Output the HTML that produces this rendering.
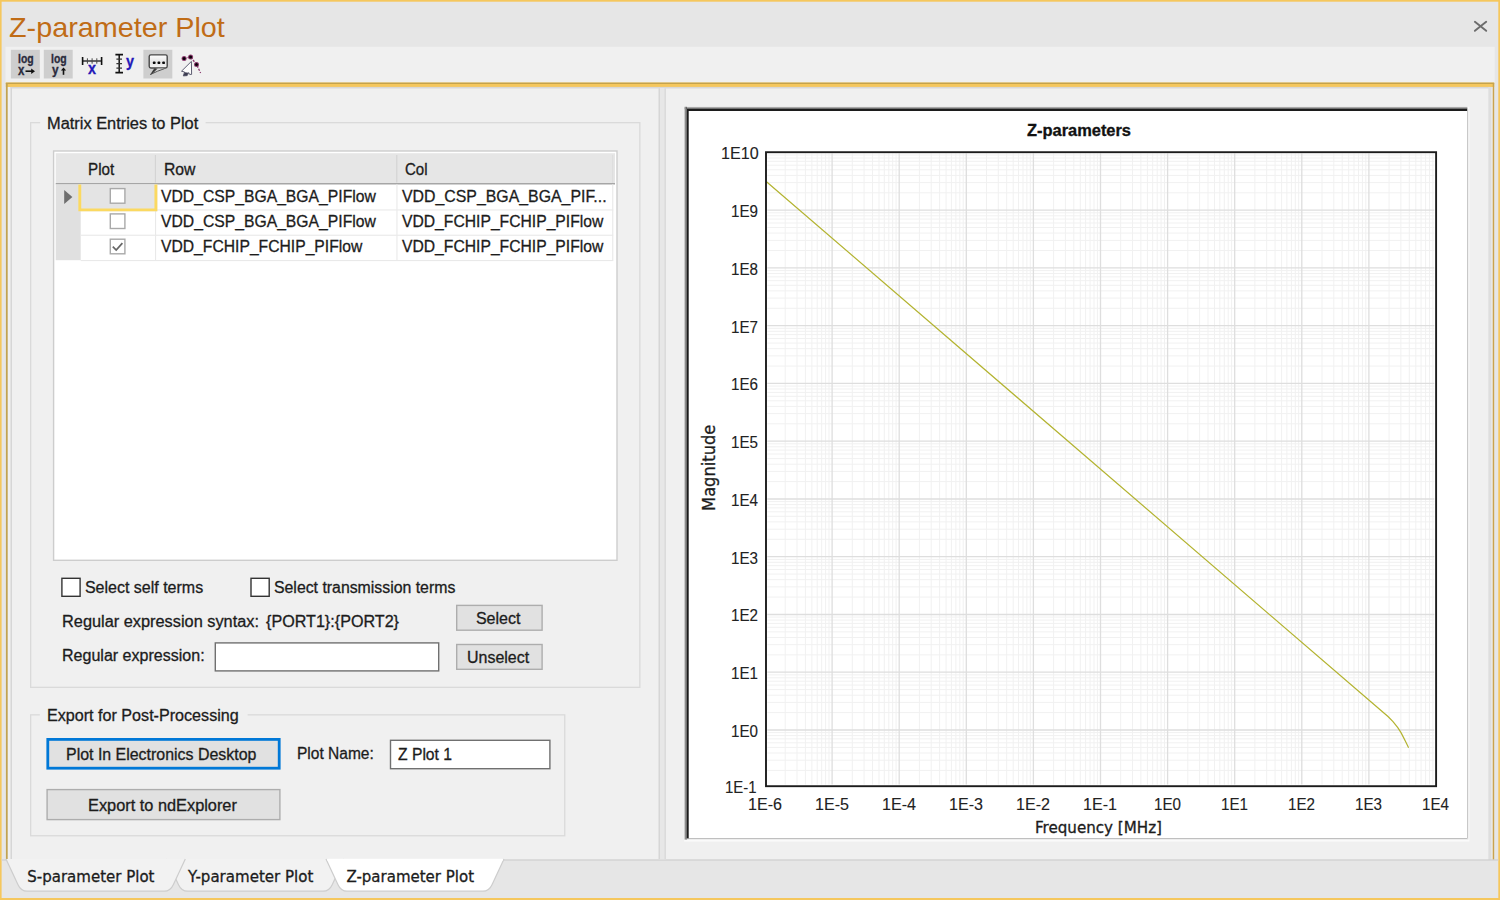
<!DOCTYPE html>
<html lang="en"><head><meta charset="utf-8"><title>Z-parameter Plot</title>
<style>
html,body{margin:0;padding:0}
body{width:1500px;height:900px;position:relative;overflow:hidden;background:#E6E6E6;font-family:'Liberation Sans',sans-serif}
.a{position:absolute;box-sizing:border-box}
.t{position:absolute;white-space:pre;transform-origin:0 0;display:block;-webkit-text-stroke:0.3px currentColor}
.title{-webkit-text-stroke:0 transparent}
.c{-webkit-text-stroke:0.12px currentColor}
svg{overflow:visible}
</style></head>
<body>
<svg class="a" id="ui" style="left:0;top:0" width="1500" height="900" viewBox="0 0 1500 900">
<rect x="0.00" y="0.00" width="1500.00" height="900.00" fill="#E6E6E6" />
<rect x="0.00" y="0.00" width="1500.00" height="1.70" fill="#F5C75D" />
<rect x="0.00" y="898.00" width="1500.00" height="2.00" fill="#F5C75D" />
<rect x="0.00" y="0.00" width="1.60" height="900.00" fill="#F5C75D" />
<rect x="1498.30" y="0.00" width="1.70" height="900.00" fill="#F5C75D" />
<path d="M1474.9 21.8 L1486.2 30.8 M1486.2 21.8 L1474.9 30.8" fill="none" stroke="#6C6C6C" stroke-width="1.9" stroke-linecap="round"/>
<rect x="5.50" y="46.80" width="1489.20" height="36.20" fill="#F0F0F0" />
<rect x="10.90" y="49.80" width="28.90" height="28.70" fill="#CECECE" />
<rect x="43.80" y="49.80" width="28.90" height="28.70" fill="#CECECE" />
<rect x="143.40" y="49.80" width="28.90" height="28.70" fill="#CECECE" />
<path d="M25.5 71.2 H32.4" fill="none" stroke="#111" stroke-width="1.6" />
<path d="M31.2 68.5 L35 71.2 L31.2 73.9 Z" fill="#111"  />
<path d="M63.5 74.8 V69.6" fill="none" stroke="#111" stroke-width="1.6" />
<path d="M60.9 70.6 L63.5 67.4 L66.1 70.6 Z" fill="#111"  />
<path d="M82.6 57 V65 M101.6 57 V65" fill="none" stroke="#111" stroke-width="1.6" />
<path d="M82.6 61 H101.6" fill="none" stroke="#111" stroke-width="1.25" />
<path d="M87.4 58.3 V63.7 M92.1 58.3 V63.7 M96.8 58.3 V63.7" fill="none" stroke="#484848" stroke-width="1.0" />
<path d="M115.4 54.6 H123 M115.4 72.6 H123" fill="none" stroke="#111" stroke-width="1.9" />
<path d="M119.2 54.6 V72.6" fill="none" stroke="#111" stroke-width="1.5" />
<path d="M116.4 59.1 H122 M116.4 63.6 H122 M116.4 68.1 H122" fill="none" stroke="#333" stroke-width="1.1" />
<defs><linearGradient id="bub" x1="0" y1="0" x2="0" y2="1"><stop offset="0" stop-color="#FFFFFF"/><stop offset="0.55" stop-color="#E4E4E4"/><stop offset="1" stop-color="#F4F4F4"/></linearGradient></defs>
<rect x="149.2" y="54.9" width="18" height="13.1" rx="1.7" ry="1.7" fill="url(#bub)" stroke="#484848" stroke-width="1.4"/>
<rect x="152.9" y="61.5" width="2.6" height="2.6" rx="0.7" fill="#0a0a0a"/>
<rect x="157.6" y="61.5" width="2.6" height="2.6" rx="0.7" fill="#0a0a0a"/>
<rect x="162.3" y="61.5" width="2.6" height="2.6" rx="0.7" fill="#0a0a0a"/>
<path d="M150.2 74.7 L156.2 68.6 L164.8 68.6 Z" fill="#D6D6D6"  />
<path d="M154.2 68.6 L157.6 68.6 L152.2 74 L150 74.8 Z" fill="#3a3a3a"  />
<path d="M150.2 74.6 L157.6 71.2 L164.6 68.6" fill="none" stroke="#555" stroke-width="1.0" />
<path d="M184.1 58.4 L190.6 57 L196.5 64.4 L200.6 73" fill="none" stroke="#8A3A6E" stroke-width="1.3" stroke-dasharray="2.2 1.3"/>
<circle cx="184.1" cy="58.4" r="2.5" fill="#8A3A6E"/><circle cx="184.1" cy="58.4" r="1.5" fill="#0a0008"/>
<circle cx="190.6" cy="57.0" r="2.5" fill="#8A3A6E"/><circle cx="190.6" cy="57.0" r="1.5" fill="#0a0008"/>
<circle cx="196.5" cy="64.4" r="2.5" fill="#8A3A6E"/><circle cx="196.5" cy="64.4" r="1.5" fill="#0a0008"/>
<path d="M191.4 61.4 L191.6 74.4 L189.6 74.4 L188.6 72.6 L187.2 75.6 L183.3 75.9 L184.6 72 L181.5 71.2 Z" fill="#FCFCFC" stroke="#54546a" stroke-width="0.95" stroke-linejoin="round"/>
<path d="M184.8 72.2 L188.3 72.8 L187 75.5 L183.5 75.8 Z" fill="#3c3c50"  />
<rect x="5.80" y="82.60" width="1488.40" height="777.40" fill="#F0F0F0" />
<rect x="5.80" y="82.60" width="1488.40" height="4.40" fill="#F5C75D" />
<rect x="5.80" y="82.60" width="1488.40" height="1.40" fill="#C4A24C" />
<rect x="5.90" y="83.40" width="1.80" height="776.60" fill="#C2A352" />
<rect x="1492.70" y="83.40" width="1.50" height="776.60" fill="#C9A34E" />
<rect x="10.50" y="87.00" width="1.50" height="773.00" fill="#D6D6D6" />
<rect x="10.50" y="86.90" width="1481.00" height="1.60" fill="#D8D8D8" />
<rect x="1488.30" y="87.00" width="3.20" height="773.00" fill="#DEDEDE" />
<rect x="1.60" y="859.30" width="1496.70" height="1.40" fill="#D2D2D2" />
<rect x="658.60" y="88.20" width="7.40" height="771.10" fill="#E7E7E7" />
<rect x="658.60" y="88.20" width="1.40" height="771.10" fill="#D6D6D6" />
<rect x="664.40" y="88.20" width="1.60" height="771.10" fill="#DBDBDB" />
<rect x="30.65" y="122.65" width="609.20" height="564.70" fill="none" stroke="#DADADA" stroke-width="1.3" />
<rect x="40.20" y="112.00" width="165.40" height="20.00" fill="#F0F0F0" />
<rect x="53.60" y="151.00" width="563.40" height="409.30" fill="#fff" stroke="#CDCDCD" stroke-width="1.4" />
<rect x="55.70" y="153.20" width="559.30" height="29.90" fill="#E6E6E6" />
<rect x="55.70" y="183.00" width="559.30" height="1.50" fill="#A6A6A6" />
<rect x="612.20" y="155.00" width="1.00" height="28.00" fill="#DCDCDC" />
<rect x="154.80" y="155.00" width="1.20" height="27.60" fill="#D4D4D4" />
<rect x="396.20" y="155.00" width="1.20" height="27.60" fill="#D4D4D4" />
<rect x="55.70" y="184.50" width="25.00" height="75.70" fill="#E0E0E0" />
<rect x="80.70" y="209.40" width="532.50" height="1.10" fill="#E9E9E9" />
<rect x="80.70" y="234.70" width="532.50" height="1.10" fill="#E9E9E9" />
<rect x="80.70" y="260.00" width="532.50" height="1.10" fill="#E9E9E9" />
<rect x="155.00" y="184.30" width="1.10" height="76.50" fill="#E9E9E9" />
<rect x="396.40" y="184.30" width="1.10" height="76.50" fill="#E9E9E9" />
<rect x="612.20" y="184.30" width="1.10" height="76.50" fill="#E9E9E9" />
<rect x="78.40" y="184.30" width="78.90" height="27.00" fill="#E4E4E4" />
<path d="M79.8 184.5 V209.9 H155.9 V184.5" fill="none" stroke="#FBD961" stroke-width="2.9" />
<path d="M64.2 190 L72.4 197 L64.2 204 Z" fill="#6E6E6E"  />
<rect x="110.30" y="188.60" width="14.60" height="14.60" fill="#fff" stroke="#A9A9A9" stroke-width="1.4" />
<rect x="110.30" y="213.90" width="14.60" height="14.60" fill="#fff" stroke="#A9A9A9" stroke-width="1.4" />
<rect x="110.30" y="239.20" width="14.60" height="14.60" fill="#fff" stroke="#A9A9A9" stroke-width="1.4" />
<path d="M112.8 246.7 L116.2 250.1 L122.4 243.1" fill="none" stroke="#666" stroke-width="1.7" />
<rect x="61.90" y="578.30" width="18.20" height="18.00" fill="#fff" stroke="#333" stroke-width="1.4" />
<rect x="251.00" y="578.30" width="18.20" height="18.00" fill="#fff" stroke="#333" stroke-width="1.4" />
<rect x="456.70" y="605.40" width="85.40" height="24.80" fill="#E1E1E1" stroke="#ADADAD" stroke-width="1.4" />
<rect x="215.30" y="642.90" width="223.40" height="28.00" fill="#fff" stroke="#707070" stroke-width="1.4" />
<rect x="456.70" y="644.50" width="85.40" height="24.80" fill="#E1E1E1" stroke="#ADADAD" stroke-width="1.4" />
<rect x="30.65" y="714.85" width="534.10" height="120.90" fill="none" stroke="#DADADA" stroke-width="1.3" />
<rect x="39.80" y="704.00" width="207.80" height="20.00" fill="#F0F0F0" />
<rect x="47.80" y="739.40" width="231.40" height="28.80" fill="#E1E1E1" stroke="#0078D7" stroke-width="2.8" />
<rect x="390.50" y="740.30" width="159.40" height="28.40" fill="#fff" stroke="#707070" stroke-width="1.4" />
<rect x="47.10" y="789.60" width="232.80" height="30.00" fill="#E1E1E1" stroke="#ADADAD" stroke-width="1.4" />
<defs><linearGradient id="gl" x1="0" y1="0" x2="1" y2="0"><stop offset="0" stop-color="#D0D0D0"/><stop offset="1" stop-color="#4a4a4a"/></linearGradient><linearGradient id="gt" x1="0" y1="0" x2="0" y2="1"><stop offset="0" stop-color="#D0D0D0"/><stop offset="1" stop-color="#4a4a4a"/></linearGradient></defs>
<rect x="684.20" y="106.80" width="785.20" height="734.80" fill="#FAFAFA" />
<rect x="684.20" y="106.80" width="783.20" height="2.40" fill="url(#gt)" />
<rect x="684.20" y="106.80" width="2.60" height="732.80" fill="url(#gl)" />
<rect x="686.70" y="109.00" width="781.70" height="730.60" fill="#E4E4E4" />
<rect x="686.70" y="109.00" width="780.50" height="729.40" fill="#1c1c1c" />
<rect x="688.70" y="111.00" width="778.50" height="727.40" fill="#fff" />
<path d="M785.2 153.5 V784.6 M797.0 153.5 V784.6 M805.4 153.5 V784.6 M811.9 153.5 V784.6 M817.2 153.5 V784.6 M821.7 153.5 V784.6 M825.6 153.5 V784.6 M829.0 153.5 V784.6 M852.3 153.5 V784.6 M864.1 153.5 V784.6 M872.5 153.5 V784.6 M879.0 153.5 V784.6 M884.3 153.5 V784.6 M888.8 153.5 V784.6 M892.7 153.5 V784.6 M896.1 153.5 V784.6 M919.4 153.5 V784.6 M931.2 153.5 V784.6 M939.6 153.5 V784.6 M946.1 153.5 V784.6 M951.4 153.5 V784.6 M955.9 153.5 V784.6 M959.8 153.5 V784.6 M963.2 153.5 V784.6 M986.5 153.5 V784.6 M998.3 153.5 V784.6 M1006.7 153.5 V784.6 M1013.2 153.5 V784.6 M1018.5 153.5 V784.6 M1023.0 153.5 V784.6 M1026.9 153.5 V784.6 M1030.3 153.5 V784.6 M1053.6 153.5 V784.6 M1065.4 153.5 V784.6 M1073.8 153.5 V784.6 M1080.3 153.5 V784.6 M1085.6 153.5 V784.6 M1090.1 153.5 V784.6 M1094.0 153.5 V784.6 M1097.4 153.5 V784.6 M1120.7 153.5 V784.6 M1132.5 153.5 V784.6 M1140.9 153.5 V784.6 M1147.4 153.5 V784.6 M1152.7 153.5 V784.6 M1157.2 153.5 V784.6 M1161.1 153.5 V784.6 M1164.5 153.5 V784.6 M1187.8 153.5 V784.6 M1199.6 153.5 V784.6 M1208.0 153.5 V784.6 M1214.5 153.5 V784.6 M1219.8 153.5 V784.6 M1224.3 153.5 V784.6 M1228.2 153.5 V784.6 M1231.6 153.5 V784.6 M1254.9 153.5 V784.6 M1266.7 153.5 V784.6 M1275.1 153.5 V784.6 M1281.6 153.5 V784.6 M1286.9 153.5 V784.6 M1291.4 153.5 V784.6 M1295.3 153.5 V784.6 M1298.7 153.5 V784.6 M1322.0 153.5 V784.6 M1333.8 153.5 V784.6 M1342.2 153.5 V784.6 M1348.7 153.5 V784.6 M1354.0 153.5 V784.6 M1358.5 153.5 V784.6 M1362.4 153.5 V784.6 M1365.8 153.5 V784.6 M1389.1 153.5 V784.6 M1400.9 153.5 V784.6 M1409.3 153.5 V784.6 M1415.8 153.5 V784.6 M1421.1 153.5 V784.6 M1425.6 153.5 V784.6 M1429.5 153.5 V784.6 M1432.9 153.5 V784.6 M767.3 192.8 H1434.3 M767.3 182.6 H1434.3 M767.3 175.4 H1434.3 M767.3 169.8 H1434.3 M767.3 165.2 H1434.3 M767.3 161.3 H1434.3 M767.3 158.0 H1434.3 M767.3 155.0 H1434.3 M767.3 250.5 H1434.3 M767.3 240.4 H1434.3 M767.3 233.1 H1434.3 M767.3 227.5 H1434.3 M767.3 223.0 H1434.3 M767.3 219.1 H1434.3 M767.3 215.8 H1434.3 M767.3 212.8 H1434.3 M767.3 308.3 H1434.3 M767.3 298.1 H1434.3 M767.3 290.9 H1434.3 M767.3 285.3 H1434.3 M767.3 280.7 H1434.3 M767.3 276.9 H1434.3 M767.3 273.5 H1434.3 M767.3 270.6 H1434.3 M767.3 366.1 H1434.3 M767.3 355.9 H1434.3 M767.3 348.7 H1434.3 M767.3 343.1 H1434.3 M767.3 338.5 H1434.3 M767.3 334.6 H1434.3 M767.3 331.3 H1434.3 M767.3 328.3 H1434.3 M767.3 423.8 H1434.3 M767.3 413.6 H1434.3 M767.3 406.4 H1434.3 M767.3 400.8 H1434.3 M767.3 396.3 H1434.3 M767.3 392.4 H1434.3 M767.3 389.0 H1434.3 M767.3 386.1 H1434.3 M767.3 481.6 H1434.3 M767.3 471.4 H1434.3 M767.3 464.2 H1434.3 M767.3 458.6 H1434.3 M767.3 454.0 H1434.3 M767.3 450.1 H1434.3 M767.3 446.8 H1434.3 M767.3 443.8 H1434.3 M767.3 539.3 H1434.3 M767.3 529.2 H1434.3 M767.3 521.9 H1434.3 M767.3 516.3 H1434.3 M767.3 511.8 H1434.3 M767.3 507.9 H1434.3 M767.3 504.6 H1434.3 M767.3 501.6 H1434.3 M767.3 597.1 H1434.3 M767.3 586.9 H1434.3 M767.3 579.7 H1434.3 M767.3 574.1 H1434.3 M767.3 569.5 H1434.3 M767.3 565.7 H1434.3 M767.3 562.3 H1434.3 M767.3 559.4 H1434.3 M767.3 654.9 H1434.3 M767.3 644.7 H1434.3 M767.3 637.5 H1434.3 M767.3 631.9 H1434.3 M767.3 627.3 H1434.3 M767.3 623.4 H1434.3 M767.3 620.1 H1434.3 M767.3 617.1 H1434.3 M767.3 712.6 H1434.3 M767.3 702.4 H1434.3 M767.3 695.2 H1434.3 M767.3 689.6 H1434.3 M767.3 685.1 H1434.3 M767.3 681.2 H1434.3 M767.3 677.8 H1434.3 M767.3 674.9 H1434.3 M767.3 770.4 H1434.3 M767.3 760.2 H1434.3 M767.3 753.0 H1434.3 M767.3 747.4 H1434.3 M767.3 742.8 H1434.3 M767.3 738.9 H1434.3 M767.3 735.6 H1434.3 M767.3 732.6 H1434.3" fill="none" stroke="#F1F1F1" stroke-width="1" />
<path d="M832.1 153.5 V784.6 M899.2 153.5 V784.6 M966.3 153.5 V784.6 M1033.4 153.5 V784.6 M1100.5 153.5 V784.6 M1167.6 153.5 V784.6 M1234.7 153.5 V784.6 M1301.8 153.5 V784.6 M1368.9 153.5 V784.6 M767.3 210.2 H1434.3 M767.3 267.9 H1434.3 M767.3 325.7 H1434.3 M767.3 383.4 H1434.3 M767.3 441.2 H1434.3 M767.3 499.0 H1434.3 M767.3 556.7 H1434.3 M767.3 614.5 H1434.3 M767.3 672.2 H1434.3 M767.3 730.0 H1434.3" fill="none" stroke="#DEDEDE" stroke-width="1.3" />
<polyline points="766.5,181.7 1388,716.5 1393,721.6 1397.8,727.6 1401,732.6 1403.6,737.6 1406.3,743 1408.6,747.7" stroke="#B3B330" stroke-width="1.2" fill="none" stroke-linejoin="round"/>
<rect x="766.0" y="152.2" width="670.1" height="634.0" fill="none" stroke="#1c1c1c" stroke-width="1.9"/>
<text transform="translate(715.0,510.9) rotate(-90)" textLength="86.2" lengthAdjust="spacingAndGlyphs" font-family="DejaVu Sans, Liberation Sans, sans-serif" font-size="17.6" fill="#1c1c1c" stroke="#1c1c1c" stroke-width="0.3">Magnitude</text>
<path d="M166.5 859.0 L178.5 884.7 Q181.5 891.2 187.5 891.2 H323.2 Q329.2 891.2 332.2 884.7 L344.2 859.0 Z" fill="#F2F2F2" stroke="none"/><path d="M166.5 859.0 L178.5 884.7 Q181.5 891.2 187.5 891.2 H323.2 Q329.2 891.2 332.2 884.7 L344.2 859.0" fill="none" stroke="#CDCDCD" stroke-width="1.2"/>
<path d="M6 859.0 L18 884.7 Q21 891.2 27 891.2 H164.3 Q170.3 891.2 173.3 884.7 L185.3 859.0 Z" fill="#F2F2F2" stroke="none"/><path d="M6 859.0 L18 884.7 Q21 891.2 27 891.2 H164.3 Q170.3 891.2 173.3 884.7 L185.3 859.0" fill="none" stroke="#CDCDCD" stroke-width="1.2"/>
<path d="M326 859.0 L338 884.7 Q341 891.2 347 891.2 H483 Q489 891.2 492 884.7 L504 859.0 Z" fill="#FFFFFF" stroke="none"/><path d="M326 859.0 L338 884.7 Q341 891.2 347 891.2 H483 Q489 891.2 492 884.7 L504 859.0" fill="none" stroke="#CDCDCD" stroke-width="1.2"/>
<rect x="327.50" y="858.80" width="175.00" height="2.20" fill="#fff" />
</svg>
<div id="labels">
<span class="t title" style="left:8.90px;top:14.30px;font:normal 28px/1 'Liberation Sans',sans-serif;color:#C06C16;transform:scaleX(1.0272);">Z-parameter Plot</span>
<span class="t" style="left:17.60px;top:53.14px;font:bold 12px/1 'Liberation Sans',sans-serif;color:#2a2a3c;transform:scaleX(0.8667);">log</span>
<span class="t" style="left:17.80px;top:63.23px;font:bold 14.5px/1 'Liberation Sans',sans-serif;color:#2a2a3c;transform:scaleX(0.7923);">x</span>
<span class="t" style="left:50.60px;top:53.14px;font:bold 12px/1 'Liberation Sans',sans-serif;color:#2a2a3c;transform:scaleX(0.8667);">log</span>
<span class="t" style="left:52.10px;top:63.74px;font:bold 12px/1 'Liberation Sans',sans-serif;color:#2a2a3c;transform:scaleX(0.9869);">y</span>
<span class="t" style="left:88.20px;top:61.26px;font:bold 16px/1 'Liberation Sans',sans-serif;color:#2418B8;transform:scaleX(0.8982);">x</span>
<span class="t" style="left:125.80px;top:54.36px;font:bold 16px/1 'Liberation Sans',sans-serif;color:#2418B8;transform:scaleX(0.8982);">y</span>
<span class="t" style="left:47.00px;top:115.56px;font:normal 16px/1 'Liberation Sans',sans-serif;color:#1c1c1c;transform:scaleX(1.0243);">Matrix Entries to Plot</span>
<span class="t" style="left:88.20px;top:162.26px;font:normal 16px/1 'Liberation Sans',sans-serif;color:#1c1c1c;transform:scaleX(0.9500);">Plot</span>
<span class="t" style="left:163.60px;top:162.26px;font:normal 16px/1 'Liberation Sans',sans-serif;color:#1c1c1c;transform:scaleX(0.9839);">Row</span>
<span class="t" style="left:404.60px;top:162.26px;font:normal 16px/1 'Liberation Sans',sans-serif;color:#1c1c1c;transform:scaleX(0.9411);">Col</span>
<span class="t" style="left:160.60px;top:188.65px;font:normal 16.6px/1 'Liberation Sans',sans-serif;color:#1c1c1c;transform:scaleX(0.9468);">VDD_CSP_BGA_BGA_PIFlow</span>
<span class="t" style="left:402.00px;top:188.65px;font:normal 16.6px/1 'Liberation Sans',sans-serif;color:#1c1c1c;transform:scaleX(0.9562);">VDD_CSP_BGA_BGA_PIF...</span>
<span class="t" style="left:160.60px;top:213.95px;font:normal 16.6px/1 'Liberation Sans',sans-serif;color:#1c1c1c;transform:scaleX(0.9468);">VDD_CSP_BGA_BGA_PIFlow</span>
<span class="t" style="left:402.00px;top:213.95px;font:normal 16.6px/1 'Liberation Sans',sans-serif;color:#1c1c1c;transform:scaleX(0.9451);">VDD_FCHIP_FCHIP_PIFlow</span>
<span class="t" style="left:160.60px;top:239.25px;font:normal 16.6px/1 'Liberation Sans',sans-serif;color:#1c1c1c;transform:scaleX(0.9451);">VDD_FCHIP_FCHIP_PIFlow</span>
<span class="t" style="left:402.00px;top:239.25px;font:normal 16.6px/1 'Liberation Sans',sans-serif;color:#1c1c1c;transform:scaleX(0.9451);">VDD_FCHIP_FCHIP_PIFlow</span>
<span class="t" style="left:84.90px;top:580.36px;font:normal 16px/1 'Liberation Sans',sans-serif;color:#1c1c1c;">Select self terms</span>
<span class="t" style="left:273.90px;top:580.36px;font:normal 16px/1 'Liberation Sans',sans-serif;color:#1c1c1c;transform:scaleX(0.9898);">Select transmission terms</span>
<span class="t" style="left:62.30px;top:613.86px;font:normal 16px/1 'Liberation Sans',sans-serif;color:#1c1c1c;transform:scaleX(1.0208);">Regular expression syntax:</span>
<span class="t" style="left:266.20px;top:613.86px;font:normal 16px/1 'Liberation Sans',sans-serif;color:#1c1c1c;transform:scaleX(1.0081);">{PORT1}:{PORT2}</span>
<span class="t" style="left:475.90px;top:610.66px;font:normal 16px/1 'Liberation Sans',sans-serif;color:#1c1c1c;">Select</span>
<span class="t" style="left:62.30px;top:648.26px;font:normal 16px/1 'Liberation Sans',sans-serif;color:#1c1c1c;transform:scaleX(1.0021);">Regular expression:</span>
<span class="t" style="left:467.10px;top:649.66px;font:normal 16px/1 'Liberation Sans',sans-serif;color:#1c1c1c;transform:scaleX(0.9976);">Unselect</span>
<span class="t" style="left:47.10px;top:708.26px;font:normal 16px/1 'Liberation Sans',sans-serif;color:#1c1c1c;transform:scaleX(1.0074);">Export for Post-Processing</span>
<span class="t" style="left:66.30px;top:747.46px;font:normal 16px/1 'Liberation Sans',sans-serif;color:#1c1c1c;transform:scaleX(0.9958);">Plot In Electronics Desktop</span>
<span class="t" style="left:296.60px;top:745.96px;font:normal 16px/1 'Liberation Sans',sans-serif;color:#1c1c1c;transform:scaleX(0.9704);">Plot Name:</span>
<span class="t" style="left:398.40px;top:747.06px;font:normal 16px/1 'Liberation Sans',sans-serif;color:#1c1c1c;transform:scaleX(0.9793);">Z Plot 1</span>
<span class="t" style="left:87.60px;top:797.86px;font:normal 16px/1 'Liberation Sans',sans-serif;color:#1c1c1c;transform:scaleX(1.0208);">Export to ndExplorer</span>
<span class="t" style="left:1027.20px;top:123.16px;font:bold 16px/1 'Liberation Sans',sans-serif;color:#111;transform:scaleX(1.0259);">Z-parameters</span>
<span class="t c" style="left:720.70px;top:146.36px;font:normal 16px/1 'Liberation Sans',sans-serif;color:#222;transform:scaleX(1.0060);">1E10</span>
<span class="t c" style="left:731.30px;top:204.12px;font:normal 16px/1 'Liberation Sans',sans-serif;color:#222;transform:scaleX(0.9484);">1E9</span>
<span class="t c" style="left:731.30px;top:261.88px;font:normal 16px/1 'Liberation Sans',sans-serif;color:#222;transform:scaleX(0.9484);">1E8</span>
<span class="t c" style="left:731.30px;top:319.64px;font:normal 16px/1 'Liberation Sans',sans-serif;color:#222;transform:scaleX(0.9484);">1E7</span>
<span class="t c" style="left:731.30px;top:377.40px;font:normal 16px/1 'Liberation Sans',sans-serif;color:#222;transform:scaleX(0.9484);">1E6</span>
<span class="t c" style="left:731.30px;top:435.16px;font:normal 16px/1 'Liberation Sans',sans-serif;color:#222;transform:scaleX(0.9484);">1E5</span>
<span class="t c" style="left:731.30px;top:492.92px;font:normal 16px/1 'Liberation Sans',sans-serif;color:#222;transform:scaleX(0.9484);">1E4</span>
<span class="t c" style="left:731.30px;top:550.68px;font:normal 16px/1 'Liberation Sans',sans-serif;color:#222;transform:scaleX(0.9484);">1E3</span>
<span class="t c" style="left:731.30px;top:608.44px;font:normal 16px/1 'Liberation Sans',sans-serif;color:#222;transform:scaleX(0.9484);">1E2</span>
<span class="t c" style="left:731.30px;top:666.20px;font:normal 16px/1 'Liberation Sans',sans-serif;color:#222;transform:scaleX(0.9484);">1E1</span>
<span class="t c" style="left:731.30px;top:723.96px;font:normal 16px/1 'Liberation Sans',sans-serif;color:#222;transform:scaleX(0.9484);">1E0</span>
<span class="t c" style="left:725.30px;top:780.36px;font:normal 16px/1 'Liberation Sans',sans-serif;color:#222;transform:scaleX(0.9350);">1E-1</span>
<span class="t c" style="left:747.70px;top:796.66px;font:normal 16px/1 'Liberation Sans',sans-serif;color:#222;transform:scaleX(1.0060);">1E-6</span>
<span class="t c" style="left:814.80px;top:796.66px;font:normal 16px/1 'Liberation Sans',sans-serif;color:#222;transform:scaleX(1.0060);">1E-5</span>
<span class="t c" style="left:881.90px;top:796.66px;font:normal 16px/1 'Liberation Sans',sans-serif;color:#222;transform:scaleX(1.0060);">1E-4</span>
<span class="t c" style="left:949.00px;top:796.66px;font:normal 16px/1 'Liberation Sans',sans-serif;color:#222;transform:scaleX(1.0060);">1E-3</span>
<span class="t c" style="left:1016.10px;top:796.66px;font:normal 16px/1 'Liberation Sans',sans-serif;color:#222;transform:scaleX(1.0060);">1E-2</span>
<span class="t c" style="left:1083.20px;top:796.66px;font:normal 16px/1 'Liberation Sans',sans-serif;color:#222;transform:scaleX(1.0060);">1E-1</span>
<span class="t c" style="left:1153.80px;top:796.66px;font:normal 16px/1 'Liberation Sans',sans-serif;color:#222;transform:scaleX(0.9484);">1E0</span>
<span class="t c" style="left:1220.90px;top:796.66px;font:normal 16px/1 'Liberation Sans',sans-serif;color:#222;transform:scaleX(0.9484);">1E1</span>
<span class="t c" style="left:1288.00px;top:796.66px;font:normal 16px/1 'Liberation Sans',sans-serif;color:#222;transform:scaleX(0.9484);">1E2</span>
<span class="t c" style="left:1355.10px;top:796.66px;font:normal 16px/1 'Liberation Sans',sans-serif;color:#222;transform:scaleX(0.9484);">1E3</span>
<span class="t c" style="left:1422.20px;top:796.66px;font:normal 16px/1 'Liberation Sans',sans-serif;color:#222;transform:scaleX(0.9484);">1E4</span>
<span class="t" style="left:1035.00px;top:820.60px;font:normal 15px/1 'DejaVu Sans','Liberation Sans',sans-serif;color:#1c1c1c;transform:scaleX(1.0074);">Frequency [MHz]</span>
<span class="t" style="left:27.30px;top:870.00px;font:normal 15px/1 'DejaVu Sans','Liberation Sans',sans-serif;color:#1c1c1c;">S-parameter Plot</span>
<span class="t" style="left:188.00px;top:870.00px;font:normal 15px/1 'DejaVu Sans','Liberation Sans',sans-serif;color:#1c1c1c;transform:scaleX(1.0029);">Y-parameter Plot</span>
<span class="t" style="left:346.40px;top:870.00px;font:normal 15px/1 'DejaVu Sans','Liberation Sans',sans-serif;color:#1c1c1c;">Z-parameter Plot</span>
</div>
</body></html>
